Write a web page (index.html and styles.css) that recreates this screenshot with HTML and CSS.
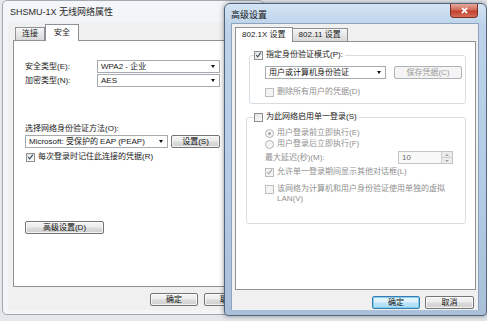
FILE: index.html
```html
<!DOCTYPE html>
<html lang="zh-CN">
<head>
<meta charset="UTF-8">
<meta name="viewport" content="width=device-width, initial-scale=1.0">
<title>高级设置</title>
<link rel="stylesheet" href="styles.css">
</head>
<body>

  <!-- back window: wireless network properties -->
  <div class="win win-back">
    <div class="titlebar">SHSMU-1X 无线网络属性</div>
    <div class="client">
      <div class="tabs">
        <span class="tab">连接</span>
        <span class="tab active">安全</span>
      </div>
      <div class="panel panel-sec">
        <div class="field">
          <span class="lbl">安全类型(E):</span>
          <span class="combo w123"><span>WPA2 - 企业</span><i class="arrow"></i></span>
        </div>
        <div class="field gap1">
          <span class="lbl">加密类型(N):</span>
          <span class="combo w123"><span>AES</span><i class="arrow"></i></span>
        </div>
        <div class="caption">选择网络身份验证方法(O):</div>
        <div class="field gap1">
          <span class="combo w143"><span>Microsoft: 受保护的 EAP (PEAP)</span><i class="arrow"></i></span>
          <span class="btn w49 ml3">设置(S)</span>
        </div>
        <div class="check-line mt4">
          <span class="cb checked"><svg viewBox="0 0 9 9"><polyline points="1.5,4.5 3.5,7 7.5,1.5"/></svg></span>
          <span>每次登录时记住此连接的凭据(R)</span>
        </div>
        <span class="btn w79 adv">高级设置(D)</span>
      </div>
      <div class="footer">
        <span class="btn w48">确定</span>
        <span class="btn w48">取消</span>
      </div>
    </div>
  </div>

  <!-- front window: advanced settings -->
  <div class="win win-front">
    <div class="titlebar">
      <span class="title">高级设置</span>
      <span class="close"><svg viewBox="0 0 10 8"><path d="M2 1 L8 7 M8 1 L2 7"/></svg></span>
    </div>
    <div class="client">
      <div class="tabs">
        <span class="tab active">802.1X 设置</span>
        <span class="tab">802.11 设置</span>
      </div>
      <div class="panel panel-adv">
        <fieldset class="grp grp1">
          <legend class="check-line">
            <span class="cb checked"><svg viewBox="0 0 9 9"><polyline points="1.5,4.5 3.5,7 7.5,1.5"/></svg></span>
            <span>指定身份验证模式(P):</span>
          </legend>
          <div class="inner">
            <div class="field mt6">
              <span class="combo w121"><span>用户或计算机身份验证</span><i class="arrow"></i></span>
              <span class="btn w67 ml9 disabled">保存凭据(C)</span>
            </div>
            <div class="check-line mt8 disabled">
              <span class="cb"></span>
              <span>删除所有用户的凭据(D)</span>
            </div>
          </div>
        </fieldset>

        <fieldset class="grp grp2">
          <legend class="check-line">
            <span class="cb"></span>
            <span>为此网络启用单一登录(S)</span>
          </legend>
          <div class="inner">
            <div class="check-line mt6 disabled">
              <span class="radio on"></span>
              <span>用户登录前立即执行(E)</span>
            </div>
            <div class="check-line gap1 disabled">
              <span class="radio"></span>
              <span>用户登录后立即执行(F)</span>
            </div>
            <div class="field delay disabled">
              <span>最大延迟(秒)(M):</span>
              <span class="spin"><span>10</span><span class="spin-btns"><i class="up"></i><i class="down"></i></span></span>
            </div>
            <div class="check-line mt3 disabled">
              <span class="cb checked"><svg viewBox="0 0 9 9"><polyline points="1.5,4.5 3.5,7 7.5,1.5"/></svg></span>
              <span>允许单一登录期间显示其他对话框(L)</span>
            </div>
            <div class="check-line two mt7 disabled">
              <span class="cb"></span>
              <span>该网络为计算机和用户身份验证使用单独的虚拟<br>LAN(V)</span>
            </div>
          </div>
        </fieldset>
      </div>
      <div class="footer">
        <span class="btn w48 default">确定</span>
        <span class="btn w49">取消</span>
      </div>
    </div>
  </div>

</body>
</html>
```

FILE: styles.css
```css
body {
  margin: 0;
  width: 487px;
  height: 321px;
  overflow: hidden;
  position: relative;
  background: #e4e8ed;
  font-family: "Liberation Sans", "Noto Sans CJK SC", sans-serif;
  font-size: 8px;
  line-height: 10px;
  color: #1a1a1a;
}

/* windows sit on a free desktop */
.win {
  position: absolute;
  box-sizing: border-box;
  display: flex;
  flex-direction: column;
}
.win-back {
  left: 2px;
  top: 0;
  width: 262px;
  height: 315px;
  background: #f3f5f8;
  border: 1px solid #a2a9b1;
  border-radius: 5px;
  padding: 0 5px 4px 5px;
}
.win-front {
  left: 224px;
  top: 3px;
  width: 263px;
  height: 313px;
  background: linear-gradient(#d4e4f4, #bcd3ea 22px, #b3cbe5 60%, #aac0d9);
  border: 1px solid #51647a;
  border-radius: 6px 6px 4px 4px;
  padding: 0 7px 5px 6px;
  box-shadow: 0 0 5px rgba(0, 0, 0, 0.45);
}

.titlebar {
  height: 21px;
  display: flex;
  align-items: center;
  font-size: 9px;
  color: #2b2b2b;
  padding-left: 2px;
}
.win-front .titlebar {
  height: 19px;
  align-items: flex-start;
  padding-left: 0;
  margin-right: 1px;
}
.win-front .title {
  padding-top: 6px;
  color: #111;
}
.close {
  margin-left: auto;
  width: 28px;
  height: 14px;
  box-sizing: border-box;
  border: 1px solid #7a2e24;
  border-top: none;
  border-radius: 0 0 4px 4px;
  background: linear-gradient(#e7a99d, #d26a58 45%, #c0402c 55%, #d7705c);
  display: flex;
  align-items: center;
  justify-content: center;
}
.close svg {
  width: 9px;
  height: 7px;
}
.close path {
  stroke: #fff;
  stroke-width: 2;
  fill: none;
}

.client {
  flex: 1;
  display: flex;
  flex-direction: column;
  background: #f0f0f0;
  padding: 2px 0 0 5px;
}
.win-front .client {
  padding: 3px 3px 0 3px;
  border: 1px solid #8ea3bb;
  border-bottom: none;
}

/* tabs */
.tabs {
  display: flex;
  align-items: flex-end;
  height: 16px;
  padding-left: 2px;
  position: relative;
  z-index: 1;
}
.win-front .tabs {
  height: 14px;
  padding-left: 0;
}
.tab {
  box-sizing: border-box;
  height: 13px;
  padding: 0 6px;
  border: 1px solid #8e9297;
  border-bottom: none;
  border-left: none;
  background: linear-gradient(#f7f7f7, #e6e6e6 50%, #d9d9d9);
  display: flex;
  align-items: center;
}
.tab:first-child {
  border-left: 1px solid #8e9297;
}
.tab.active {
  height: 17px;
  margin-bottom: -1px;
  background: #fff;
  border-left: 1px solid #8e9297;
  padding: 0 8px 1px;
}
.win-back .tab:first-child {
  width: 30px;
  justify-content: center;
}
.win-front .tab.active {
  height: 15px;
  padding: 0 6px 1px;
}

.panel {
  box-sizing: border-box;
  background: #fff;
  border: 1px solid #8e9297;
  display: flex;
  flex-direction: column;
  align-items: flex-start;
}
.panel-sec {
  height: 247px;
  padding: 19px 0 0 11px;
}
.panel-adv {
  width: 241px;
  height: 249px;
  padding-top: 8px;
  align-items: stretch;
}

.footer {
  display: flex;
  justify-content: flex-end;
  gap: 6px;
  padding: 6px 0 0 0;
}
.win-back .footer {
  padding-right: 6px;
}
.win-front .footer {
  gap: 5px;
  padding: 6px 1px 0 0;
}

/* controls */
.field {
  display: flex;
  align-items: center;
  height: 13px;
}
.lbl {
  width: 72px;
}
.caption {
  margin-top: 37px;
}
.combo {
  box-sizing: border-box;
  height: 13px;
  border: 1px solid #a7abb0;
  background: #fff;
  display: flex;
  align-items: center;
  justify-content: space-between;
  padding: 0 4px 0 3px;
  white-space: nowrap;
}
.arrow {
  width: 0;
  height: 0;
  border-left: 2.5px solid transparent;
  border-right: 2.5px solid transparent;
  border-top: 3px solid #111;
}
.btn {
  box-sizing: border-box;
  height: 13px;
  border: 1px solid #747474;
  border-radius: 2px;
  background: linear-gradient(#f4f4f4, #ebebeb 48%, #dcdcdc 52%, #d0d0d0);
  box-shadow: inset 0 0 0 1px rgba(255, 255, 255, 0.7);
  display: inline-flex;
  align-items: center;
  justify-content: center;
  color: #111;
  white-space: nowrap;
}
.btn.default {
  border-color: #3d7bad;
  background: linear-gradient(#eaf6fd, #d9f0fc 48%, #bee6fd 52%, #a7d9f5);
  box-shadow: inset 0 0 0 1px #7fd0f5;
}
.btn.disabled {
  border-color: #adb2b5;
  background: #f4f4f4;
  color: #9a9a9a;
  box-shadow: none;
}
.adv {
  margin-top: 59px;
}

.w48 { width: 48px; }
.w49 { width: 49px; }
.w67 { width: 68px; }
.w79 { width: 79px; }
.w121 { width: 121px; }
.w123 { width: 123px; }
.w143 { width: 143px; }
.ml3 { margin-left: 3px; }
.ml9 { margin-left: 8px; }
.gap1 { margin-top: 1px; }
.mt3 { margin-top: 3px; }
.mt4 { margin-top: 4px; }
.mt6 { margin-top: 6px; }
.mt7 { margin-top: 7px; }
.mt8 { margin-top: 8px; }

.check-line {
  display: flex;
  align-items: center;
  gap: 3px;
  height: 10px;
  white-space: nowrap;
}
.check-line.two {
  align-items: flex-start;
  height: 20px;
}
.check-line.two .cb {
  margin-top: 1px;
}
.cb {
  box-sizing: border-box;
  width: 9px;
  height: 9px;
  flex: none;
  border: 1px solid #8f8f8f;
  background: linear-gradient(135deg, #e2e2e2, #fcfcfc);
  display: flex;
  align-items: center;
  justify-content: center;
}
.cb svg {
  width: 8px;
  height: 8px;
}
.cb polyline {
  fill: none;
  stroke: #3a4d66;
  stroke-width: 1.4;
}
.check-line.panel-sec .cb,
.panel-sec .cb {
  margin-left: 1px;
}
.radio {
  box-sizing: border-box;
  width: 9px;
  height: 9px;
  flex: none;
  border: 1px solid #b5b5b5;
  border-radius: 50%;
  background: #f4f4f4;
  display: flex;
  align-items: center;
  justify-content: center;
}
.radio.on::after {
  content: "";
  width: 3px;
  height: 3px;
  border-radius: 50%;
  background: #a8a8a8;
}
.disabled {
  color: #8f8f8f;
}
.disabled .cb {
  border-color: #bdbdbd;
  background: #f4f4f4;
}
.disabled .cb polyline {
  stroke: #a6a6a6;
}

/* group boxes */
.grp {
  margin: 0 9px 0 13px;
  border: 1px solid #d6dde3;
  border-radius: 3px;
  padding: 0 4px 6px 4px;
  min-width: 0;
}
.grp legend {
  padding: 0 2px 0 0;
  margin-left: 0;
}
.grp2 {
  margin: 8px 9px 0 10px;
  padding: 0 4px 19px 7px;
}
.inner {
  margin-left: 11px;
  display: flex;
  flex-direction: column;
  align-items: flex-start;
}
.grp2 .inner {
  align-items: stretch;
}
.delay {
  margin-top: 2px;
  justify-content: space-between;
  margin-right: 8px;
}
.spin {
  box-sizing: border-box;
  width: 55px;
  height: 13px;
  border: 1px solid #c2c6ca;
  background: #f8f8f8;
  display: flex;
  align-items: stretch;
  justify-content: space-between;
  padding-left: 3px;
  color: #6f6f6f;
}
.spin > span:first-child {
  align-self: center;
}
.spin-btns {
  width: 10px;
  display: flex;
  flex-direction: column;
  border-left: 1px solid #d0d0d0;
}
.spin-btns i {
  flex: 1;
  display: flex;
  align-items: center;
  justify-content: center;
  background: #ececec;
}
.spin-btns i + i {
  border-top: 1px solid #d0d0d0;
}
.spin-btns i::after {
  content: "";
  border-left: 2px solid transparent;
  border-right: 2px solid transparent;
}
.spin-btns .up::after {
  border-bottom: 2px solid #a0a0a0;
}
.spin-btns .down::after {
  border-top: 2px solid #a0a0a0;
}
```
